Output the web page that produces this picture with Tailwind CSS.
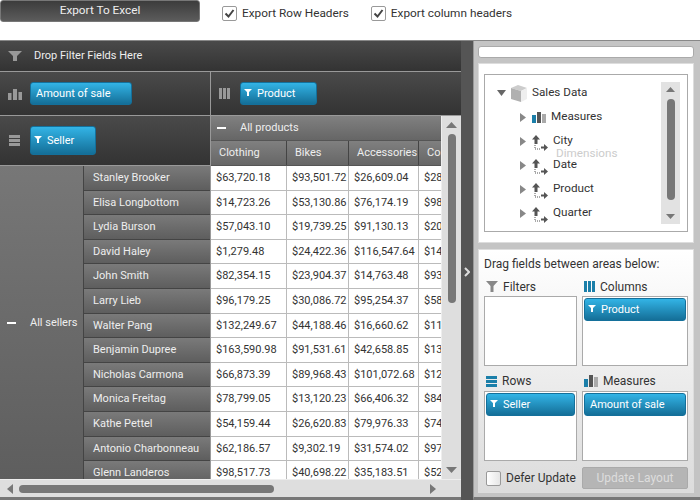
<!DOCTYPE html>
<html lang="en">
<head>
  <meta charset="UTF-8">
  <title>Pivot Grid</title>
  <script src="https://cdn.jsdelivr.net/npm/@tailwindcss/browser@4"></script>
</head>
<body class="w-[700px] h-[500px] overflow-hidden bg-white font-['Roboto',sans-serif] text-[12px] text-[#333]">
  <!-- toolbar -->
  <div class="h-[40px] flex items-start text-[11.8px]">
    <button class="w-[200px] h-[22px] rounded-[3px] border border-[#777] bg-gradient-to-b from-[#3c3c3c] to-[#5c5c5c] text-[#eee]">Export To Excel</button>
    <label class="ml-[22px] mt-[5px] flex items-center gap-[5px]">
      <span class="w-[15px] h-[15px] border border-[#999] rounded-[2px] flex items-center justify-center">
        <svg width="11" height="11" viewBox="0 0 11 11"><path d="M1.5 5.5 4.5 8.500 9.500 2" fill="none" stroke="#444" stroke-width="2"/></svg>
      </span>
      Export Row Headers
    </label>
    <label class="ml-[22px] mt-[5px] flex items-center gap-[5px]">
      <span class="w-[15px] h-[15px] border border-[#999] rounded-[2px] flex items-center justify-center">
        <svg width="11" height="11" viewBox="0 0 11 11"><path d="M1.5 5.5 4.5 8.500 9.500 2" fill="none" stroke="#444" stroke-width="2"/></svg>
      </span>
      Export column headers
    </label>
  </div>

  <div class="h-[460px] flex border-t border-[#888]">
    <!-- pivot grid -->
    <div class="w-[461px] flex flex-col shrink-0 text-[11px]">
      <div class="h-[31px] flex items-center border-b border-[#999] bg-gradient-to-b from-[#4a4a4a] to-[#333] text-[#eee]">
        <svg class="ml-[8px]" width="14" height="12" viewBox="0 0 14 12"><path d="M0 1h14L9 6v5H5V6z" fill="#999"/></svg>
        <span class="ml-[12px] pt-[1px]">Drop Filter Fields Here</span>
      </div>
      <div class="h-[44px] flex border-b border-[#999]">
        <div class="w-[211px] border-r border-[#999] flex items-center bg-gradient-to-b from-[#4a4a4a] to-[#333]">
          <svg class="ml-[8px]" width="14" height="12" viewBox="0 0 14 12"><path d="M0 5h3.500v7H0zM5 1h4v11H5zM10.500 4H14v8h-3.500z" fill="#999"/></svg>
          <span class="ml-[8px] w-[102px] h-[23px] rounded-[3px] border border-[#14709b] bg-gradient-to-b from-[#33b4e6] to-[#146f98] text-white flex items-center px-[5px] pt-[1px]">Amount of sale</span>
        </div>
        <div class="flex-1 flex items-center bg-gradient-to-b from-[#4a4a4a] to-[#333]">
          <svg class="ml-[8px]" width="11" height="11" viewBox="0 0 11 11"><path d="M0 0h3v11H0zM4 0h3v11H4zM8 0h3v11H8z" fill="#999"/></svg>
          <span class="ml-[10px] w-[77px] h-[23px] rounded-[3px] border border-[#14709b] bg-gradient-to-b from-[#33b4e6] to-[#146f98] text-white flex items-center pl-[3px] pt-[1px]">
            <svg class="mr-[5px] mb-[4px]" width="8" height="7" viewBox="0 0 8 7"><path d="M0 0h8L5 3v4H3V3z" fill="#fff"/></svg>Product
          </span>
        </div>
      </div>
      <div class="flex-1 min-h-0 flex flex-col relative">
        <div class="flex-1 min-h-0 flex">
          <!-- row headers -->
          <div class="w-[211px] shrink-0 flex flex-col border-r border-[#999]">
            <div class="h-[50px] shrink-0 flex items-center border-b border-[#999] bg-gradient-to-b from-[#4a4a4a] to-[#333]">
              <svg class="ml-[9px]" width="11" height="11" viewBox="0 0 11 11"><path d="M0 0h11v3H0zM0 4h11v3H0zM0 8h11v3H0z" fill="#999"/></svg>
              <span class="ml-[10px] w-[66px] h-[29px] rounded-[3px] border border-[#14709b] bg-gradient-to-b from-[#33b4e6] to-[#146f98] text-white flex items-center pl-[3px] pt-[1px]">
                <svg class="mr-[5px] mb-[4px]" width="8" height="7" viewBox="0 0 8 7"><path d="M0 0h8L5 3v4H3V3z" fill="#fff"/></svg>Seller
              </span>
            </div>
            <div class="flex-1 min-h-0 flex overflow-hidden">
              <div class="w-[84px] shrink-0 flex items-center border-r border-[#444] bg-gradient-to-b from-[#777] to-[#5e5e5e] text-[#eee]">
                <span class="ml-[7px] w-[9px] h-[2px] bg-white"></span>
                <span class="ml-[14px] pt-[1px]">All sellers</span>
              </div>
              <div class="flex-1 flex flex-col whitespace-nowrap">
                <div class="h-[24.6px] shrink-0 flex items-center pl-[9px] pt-[1px] border-b border-[#444] bg-gradient-to-b from-[#7a7a7a] to-[#5e5e5e] text-[#eee]">Stanley Brooker</div>
                <div class="h-[24.6px] shrink-0 flex items-center pl-[9px] pt-[1px] border-b border-[#444] bg-gradient-to-b from-[#7a7a7a] to-[#5e5e5e] text-[#eee]">Elisa Longbottom</div>
                <div class="h-[24.6px] shrink-0 flex items-center pl-[9px] pt-[1px] border-b border-[#444] bg-gradient-to-b from-[#7a7a7a] to-[#5e5e5e] text-[#eee]">Lydia Burson</div>
                <div class="h-[24.6px] shrink-0 flex items-center pl-[9px] pt-[1px] border-b border-[#444] bg-gradient-to-b from-[#7a7a7a] to-[#5e5e5e] text-[#eee]">David Haley</div>
                <div class="h-[24.6px] shrink-0 flex items-center pl-[9px] pt-[1px] border-b border-[#444] bg-gradient-to-b from-[#7a7a7a] to-[#5e5e5e] text-[#eee]">John Smith</div>
                <div class="h-[24.6px] shrink-0 flex items-center pl-[9px] pt-[1px] border-b border-[#444] bg-gradient-to-b from-[#7a7a7a] to-[#5e5e5e] text-[#eee]">Larry Lieb</div>
                <div class="h-[24.6px] shrink-0 flex items-center pl-[9px] pt-[1px] border-b border-[#444] bg-gradient-to-b from-[#7a7a7a] to-[#5e5e5e] text-[#eee]">Walter Pang</div>
                <div class="h-[24.6px] shrink-0 flex items-center pl-[9px] pt-[1px] border-b border-[#444] bg-gradient-to-b from-[#7a7a7a] to-[#5e5e5e] text-[#eee]">Benjamin Dupree</div>
                <div class="h-[24.6px] shrink-0 flex items-center pl-[9px] pt-[1px] border-b border-[#444] bg-gradient-to-b from-[#7a7a7a] to-[#5e5e5e] text-[#eee]">Nicholas Carmona</div>
                <div class="h-[24.6px] shrink-0 flex items-center pl-[9px] pt-[1px] border-b border-[#444] bg-gradient-to-b from-[#7a7a7a] to-[#5e5e5e] text-[#eee]">Monica Freitag</div>
                <div class="h-[24.6px] shrink-0 flex items-center pl-[9px] pt-[1px] border-b border-[#444] bg-gradient-to-b from-[#7a7a7a] to-[#5e5e5e] text-[#eee]">Kathe Pettel</div>
                <div class="h-[24.6px] shrink-0 flex items-center pl-[9px] pt-[1px] border-b border-[#444] bg-gradient-to-b from-[#7a7a7a] to-[#5e5e5e] text-[#eee]">Antonio Charbonneau</div>
                <div class="h-[24.6px] shrink-0 flex items-center pl-[9px] pt-[1px] border-b border-[#444] bg-gradient-to-b from-[#7a7a7a] to-[#5e5e5e] text-[#eee]">Glenn Landeros</div>
              </div>
            </div>
          </div>
          <!-- values -->
          <div class="w-[230px] shrink-0 flex flex-col overflow-hidden">
            <div class="h-[25px] shrink-0 flex items-center border-b border-[#555] bg-gradient-to-b from-[#808080] to-[#666] text-[#eee]">
              <span class="ml-[6px] w-[9px] h-[2px] bg-white"></span>
              <span class="ml-[14px] pt-[1px]">All products</span>
            </div>
            <div class="h-[25px] shrink-0 flex border-b border-[#555] bg-gradient-to-b from-[#808080] to-[#666] text-[#eee]">
              <div class="w-[76px] flex items-center pl-[8px] pt-[1px] border-r border-[#444]">Clothing</div>
              <div class="w-[62px] flex items-center pl-[8px] pt-[1px] border-r border-[#444]">Bikes</div>
              <div class="w-[70px] flex items-center pl-[8px] pt-[1px] border-r border-[#444]">Accessories</div>
              <div class="w-[22px] flex items-center pl-[8px] pt-[1px] overflow-hidden">Co</div>
            </div>
            <div class="flex-1 min-h-0 grid grid-cols-[76px_62px_70px_22px] auto-rows-[24.6px] overflow-hidden bg-white text-[#333] whitespace-nowrap">
              <div class="flex items-center pl-[5px] pt-[1px] border-r border-b border-[#bbb]">$63,720.18</div><div class="flex items-center pl-[5px] pt-[1px] border-r border-b border-[#bbb]">$93,501.72</div><div class="flex items-center pl-[5px] pt-[1px] border-r border-b border-[#bbb]">$26,609.04</div><div class="flex items-center pl-[5px] pt-[1px] border-b border-[#bbb] overflow-hidden">$28</div>
              <div class="flex items-center pl-[5px] pt-[1px] border-r border-b border-[#bbb]">$14,723.26</div><div class="flex items-center pl-[5px] pt-[1px] border-r border-b border-[#bbb]">$53,130.86</div><div class="flex items-center pl-[5px] pt-[1px] border-r border-b border-[#bbb]">$76,174.19</div><div class="flex items-center pl-[5px] pt-[1px] border-b border-[#bbb] overflow-hidden">$98</div>
              <div class="flex items-center pl-[5px] pt-[1px] border-r border-b border-[#bbb]">$57,043.10</div><div class="flex items-center pl-[5px] pt-[1px] border-r border-b border-[#bbb]">$19,739.25</div><div class="flex items-center pl-[5px] pt-[1px] border-r border-b border-[#bbb]">$91,130.13</div><div class="flex items-center pl-[5px] pt-[1px] border-b border-[#bbb] overflow-hidden">$20</div>
              <div class="flex items-center pl-[5px] pt-[1px] border-r border-b border-[#bbb]">$1,279.48</div><div class="flex items-center pl-[5px] pt-[1px] border-r border-b border-[#bbb]">$24,422.36</div><div class="flex items-center pl-[5px] pt-[1px] border-r border-b border-[#bbb]">$116,547.64</div><div class="flex items-center pl-[5px] pt-[1px] border-b border-[#bbb] overflow-hidden">$14</div>
              <div class="flex items-center pl-[5px] pt-[1px] border-r border-b border-[#bbb]">$82,354.15</div><div class="flex items-center pl-[5px] pt-[1px] border-r border-b border-[#bbb]">$23,904.37</div><div class="flex items-center pl-[5px] pt-[1px] border-r border-b border-[#bbb]">$14,763.48</div><div class="flex items-center pl-[5px] pt-[1px] border-b border-[#bbb] overflow-hidden">$93</div>
              <div class="flex items-center pl-[5px] pt-[1px] border-r border-b border-[#bbb]">$96,179.25</div><div class="flex items-center pl-[5px] pt-[1px] border-r border-b border-[#bbb]">$30,086.72</div><div class="flex items-center pl-[5px] pt-[1px] border-r border-b border-[#bbb]">$95,254.37</div><div class="flex items-center pl-[5px] pt-[1px] border-b border-[#bbb] overflow-hidden">$58</div>
              <div class="flex items-center pl-[5px] pt-[1px] border-r border-b border-[#bbb]">$132,249.67</div><div class="flex items-center pl-[5px] pt-[1px] border-r border-b border-[#bbb]">$44,188.46</div><div class="flex items-center pl-[5px] pt-[1px] border-r border-b border-[#bbb]">$16,660.62</div><div class="flex items-center pl-[5px] pt-[1px] border-b border-[#bbb] overflow-hidden">$11</div>
              <div class="flex items-center pl-[5px] pt-[1px] border-r border-b border-[#bbb]">$163,590.98</div><div class="flex items-center pl-[5px] pt-[1px] border-r border-b border-[#bbb]">$91,531.61</div><div class="flex items-center pl-[5px] pt-[1px] border-r border-b border-[#bbb]">$42,658.85</div><div class="flex items-center pl-[5px] pt-[1px] border-b border-[#bbb] overflow-hidden">$13</div>
              <div class="flex items-center pl-[5px] pt-[1px] border-r border-b border-[#bbb]">$66,873.39</div><div class="flex items-center pl-[5px] pt-[1px] border-r border-b border-[#bbb]">$89,968.43</div><div class="flex items-center pl-[5px] pt-[1px] border-r border-b border-[#bbb]">$101,072.68</div><div class="flex items-center pl-[5px] pt-[1px] border-b border-[#bbb] overflow-hidden">$12</div>
              <div class="flex items-center pl-[5px] pt-[1px] border-r border-b border-[#bbb]">$78,799.05</div><div class="flex items-center pl-[5px] pt-[1px] border-r border-b border-[#bbb]">$13,120.23</div><div class="flex items-center pl-[5px] pt-[1px] border-r border-b border-[#bbb]">$66,406.32</div><div class="flex items-center pl-[5px] pt-[1px] border-b border-[#bbb] overflow-hidden">$84</div>
              <div class="flex items-center pl-[5px] pt-[1px] border-r border-b border-[#bbb]">$54,159.44</div><div class="flex items-center pl-[5px] pt-[1px] border-r border-b border-[#bbb]">$26,620.83</div><div class="flex items-center pl-[5px] pt-[1px] border-r border-b border-[#bbb]">$79,976.33</div><div class="flex items-center pl-[5px] pt-[1px] border-b border-[#bbb] overflow-hidden">$74</div>
              <div class="flex items-center pl-[5px] pt-[1px] border-r border-b border-[#bbb]">$62,186.57</div><div class="flex items-center pl-[5px] pt-[1px] border-r border-b border-[#bbb]">$9,302.19</div><div class="flex items-center pl-[5px] pt-[1px] border-r border-b border-[#bbb]">$31,574.02</div><div class="flex items-center pl-[5px] pt-[1px] border-b border-[#bbb] overflow-hidden">$97</div>
              <div class="flex items-center pl-[5px] pt-[1px] border-r border-b border-[#bbb]">$98,517.73</div><div class="flex items-center pl-[5px] pt-[1px] border-r border-b border-[#bbb]">$40,698.22</div><div class="flex items-center pl-[5px] pt-[1px] border-r border-b border-[#bbb]">$35,183.51</div><div class="flex items-center pl-[5px] pt-[1px] border-b border-[#bbb] overflow-hidden">$52</div>
            </div>
          </div>
          <!-- vertical scrollbar -->
          <div class="w-[20px] shrink-0 flex flex-col items-center bg-[#dedede] border-l border-[#eee]">
            <svg class="mt-[6px]" width="11" height="6" viewBox="0 0 11 6"><path d="M5.500 0 11 6H0z" fill="#777"/></svg>
            <div class="mt-[6px] w-[8px] h-[169px] rounded-[4px] bg-[#777]"></div>
            <svg class="mt-auto mb-[6px]" width="11" height="6" viewBox="0 0 11 6"><path d="M0 0h11L5.500 6z" fill="#777"/></svg>
          </div>
        </div>
        <!-- horizontal scrollbar -->
        <div class="h-[18px] shrink-0 flex items-center bg-[#dedede] border-t border-[#eee]">
          <svg class="ml-[7px]" width="6" height="10" viewBox="0 0 6 10"><path d="M6 0v10L0 5z" fill="#777"/></svg>
          <div class="ml-[6px] w-[255px] h-[8px] rounded-[4px] bg-[#777]"></div>
          <svg class="ml-auto mr-[25px]" width="6" height="10" viewBox="0 0 6 10"><path d="M0 0v10l6-5z" fill="#777"/></svg>
        </div>
        <div class="h-[3px] shrink-0 bg-[#777]"></div>
      </div>
    </div>

    <!-- splitter -->
    <div class="w-[12px] shrink-0 flex items-center justify-center bg-[#555] pt-[2px]">
      <svg width="6" height="10" viewBox="0 0 6 10"><path d="M1 1l4 4-4 4" fill="none" stroke="#ddd" stroke-width="2"/></svg>
    </div>

    <!-- field list -->
    <div class="flex-1 min-w-0 flex flex-col bg-[#c4c4c4] border-l border-[#999] border-b-[3px] border-b-[#777] pl-[4px] pr-[6px] pt-[5px] pb-[4px]">
      <div class="h-[12px] shrink-0 rounded-[3px] border border-[#aaa] bg-white"></div>
      <div class="mt-[5px] h-[180px] shrink-0 border border-[#ddd] bg-white px-[5px] py-[10px]">
        <div class="relative h-full border border-[#aaa] flex text-[11.7px]">
          <div class="flex-1 pl-[12px] pt-[6px] text-[#333]">
            <div class="h-[24px] flex items-center">
              <svg width="9" height="6" viewBox="0 0 9 6"><path d="M0 0h9L4.500 6z" fill="#666"/></svg>
              <svg class="ml-[5px]" width="16" height="17" viewBox="0 0 16 17"><path d="M7 0l9 3-6 3-10-3z" fill="#ccc"/><path d="M0 3l10 3v11L0 14z" fill="#b0b0b0"/><path d="M10 6l6-3v11l-6 3z" fill="#eee"/></svg>
              <span class="ml-[5px]">Sales Data</span>
            </div>
            <div class="h-[24px] flex items-center pl-[23px]">
              <svg width="6" height="9" viewBox="0 0 6 9"><path d="M0 0l6 4.500L0 9z" fill="#888"/></svg>
              <svg class="ml-[6px]" width="14" height="11" viewBox="0 0 14 11"><path d="M0 3h4v8H0z" fill="#1b7fa9"/><path d="M5 0h4v11H5z" fill="#555"/><path d="M10 2h4v9h-4z" fill="#aaa"/></svg>
              <span class="ml-[5px]">Measures</span>
            </div>
            <div class="h-[24px] flex items-center pl-[23px]">
              <svg width="6" height="9" viewBox="0 0 6 9"><path d="M0 0l6 4.500L0 9z" fill="#888"/></svg>
              <svg class="ml-[6px] mt-[3px]" width="16" height="16" viewBox="0 0 16 16"><path d="M4 0 8 4.500H5.500V9H2.500V4.500H0zM9 11.500h3V9l4 3.500-4 3.500v-2.500H9z" fill="#555"/><path d="M3 10V14H8" fill="none" stroke="#555" stroke-dasharray="1 1"/></svg>
              <span class="ml-[5px]">City</span>
            </div>
            <div class="h-[24px] flex items-center pl-[23px]">
              <svg width="6" height="9" viewBox="0 0 6 9"><path d="M0 0l6 4.500L0 9z" fill="#888"/></svg>
              <svg class="ml-[6px] mt-[3px]" width="16" height="16" viewBox="0 0 16 16"><path d="M4 0 8 4.500H5.500V9H2.500V4.500H0zM9 11.500h3V9l4 3.500-4 3.500v-2.500H9z" fill="#555"/><path d="M3 10V14H8" fill="none" stroke="#555" stroke-dasharray="1 1"/></svg>
              <span class="ml-[5px]">Date</span>
            </div>
            <div class="h-[24px] flex items-center pl-[23px]">
              <svg width="6" height="9" viewBox="0 0 6 9"><path d="M0 0l6 4.500L0 9z" fill="#888"/></svg>
              <svg class="ml-[6px] mt-[3px]" width="16" height="16" viewBox="0 0 16 16"><path d="M4 0 8 4.500H5.500V9H2.500V4.500H0zM9 11.500h3V9l4 3.500-4 3.500v-2.500H9z" fill="#555"/><path d="M3 10V14H8" fill="none" stroke="#555" stroke-dasharray="1 1"/></svg>
              <span class="ml-[5px]">Product</span>
            </div>
            <div class="h-[24px] flex items-center pl-[23px]">
              <svg width="6" height="9" viewBox="0 0 6 9"><path d="M0 0l6 4.500L0 9z" fill="#888"/></svg>
              <svg class="ml-[6px] mt-[3px]" width="16" height="16" viewBox="0 0 16 16"><path d="M4 0 8 4.500H5.500V9H2.500V4.500H0zM9 11.500h3V9l4 3.500-4 3.500v-2.500H9z" fill="#555"/><path d="M3 10V14H8" fill="none" stroke="#555" stroke-dasharray="1 1"/></svg>
              <span class="ml-[5px]">Quarter</span>
            </div>
          </div>
          <span class="absolute left-[71px] top-[70px] text-[#ccc]">Dimensions</span>
          <div class="w-[19px] my-[7px] mr-[7px] flex flex-col items-center bg-[#e2e2e2]">
            <svg class="mt-[5px]" width="9" height="5" viewBox="0 0 9 5"><path d="M4.500 0 9 5H0z" fill="#777"/></svg>
            <div class="mt-[7px] w-[8px] h-[101px] rounded-[4px] bg-[#777]"></div>
            <svg class="mt-auto mb-[5px]" width="9" height="5" viewBox="0 0 9 5"><path d="M0 0h9L4.500 5z" fill="#777"/></svg>
          </div>
        </div>
      </div>
      <div class="mt-[6px] flex-1 min-h-0 border border-[#ddd] bg-gradient-to-b from-white to-[#dcdcdc] px-[5px] pt-[6px]">
        <div class="h-[16px] flex items-center whitespace-nowrap">Drag fields between areas below:</div>
        <div class="mt-[5px] grid grid-cols-[93px_106px] gap-x-[5px]">
          <div>
            <div class="h-[19px] flex items-center pl-[2px]">
              <svg width="12" height="11" viewBox="0 0 12 11"><path d="M0 0h12L7.500 5v6h-3V5z" fill="#888"/></svg>
              <span class="ml-[5px]">Filters</span>
            </div>
            <div class="h-[70px] border border-[#aaa] bg-white"></div>
          </div>
          <div>
            <div class="h-[19px] flex items-center pl-[2px]">
              <svg width="11" height="11" viewBox="0 0 11 11"><path d="M0 0h3v11H0zM4 0h3v11H4zM8 0h3v11H8z" fill="#1b7fa9"/></svg>
              <span class="ml-[5px]">Columns</span>
            </div>
            <div class="h-[70px] border border-[#aaa] bg-white p-[1px]">
              <div class="h-[23px] rounded-[3px] border border-[#14709b] bg-gradient-to-b from-[#33b4e6] to-[#146f98] text-white text-[11px] flex items-center pl-[3px] pt-[1px]">
                <svg class="mr-[5px] mb-[4px]" width="8" height="7" viewBox="0 0 8 7"><path d="M0 0h8L5 3v4H3V3z" fill="#fff"/></svg>Product
              </div>
            </div>
          </div>
          <div class="mt-[5px]">
            <div class="h-[20px] flex items-center pl-[2px]">
              <svg width="11" height="11" viewBox="0 0 11 11"><path d="M0 0h11v3H0zM0 4h11v3H0zM0 8h11v3H0z" fill="#1b7fa9"/></svg>
              <span class="ml-[5px]">Rows</span>
            </div>
            <div class="h-[70px] border border-[#aaa] bg-white p-[1px]">
              <div class="h-[23px] rounded-[3px] border border-[#14709b] bg-gradient-to-b from-[#33b4e6] to-[#146f98] text-white text-[11px] flex items-center pl-[3px] pt-[1px]">
                <svg class="mr-[5px] mb-[4px]" width="8" height="7" viewBox="0 0 8 7"><path d="M0 0h8L5 3v4H3V3z" fill="#fff"/></svg>Seller
              </div>
            </div>
          </div>
          <div class="mt-[5px]">
            <div class="h-[20px] flex items-center pl-[2px]">
              <svg width="14" height="12" viewBox="0 0 14 12"><path d="M0 4h4v8H0z" fill="#1b7fa9"/><path d="M5 0h4v12H5z" fill="#555"/><path d="M10 2h4v10h-4z" fill="#aaa"/></svg>
              <span class="ml-[5px]">Measures</span>
            </div>
            <div class="h-[70px] border border-[#aaa] bg-white p-[1px]">
              <div class="h-[23px] rounded-[3px] border border-[#14709b] bg-gradient-to-b from-[#33b4e6] to-[#146f98] text-white text-[11px] flex items-center pl-[5px] pt-[1px]">Amount of sale</div>
            </div>
          </div>
        </div>
        <div class="mt-[6px] grid grid-cols-[93px_106px] gap-x-[5px] items-center">
          <label class="flex items-center pl-[2px]">
            <span class="w-[15px] h-[15px] border border-[#999] rounded-[2px] bg-gradient-to-r from-white to-[#e6e6e6]"></span>
            <span class="ml-[5px] whitespace-nowrap">Defer Update</span>
          </label>
          <button class="h-[22px] rounded-[2px] border border-[#aaa] bg-[#b5b5b5] text-[#ddd]">Update Layout</button>
        </div>
      </div>
    </div>
  </div>
</body>
</html>
